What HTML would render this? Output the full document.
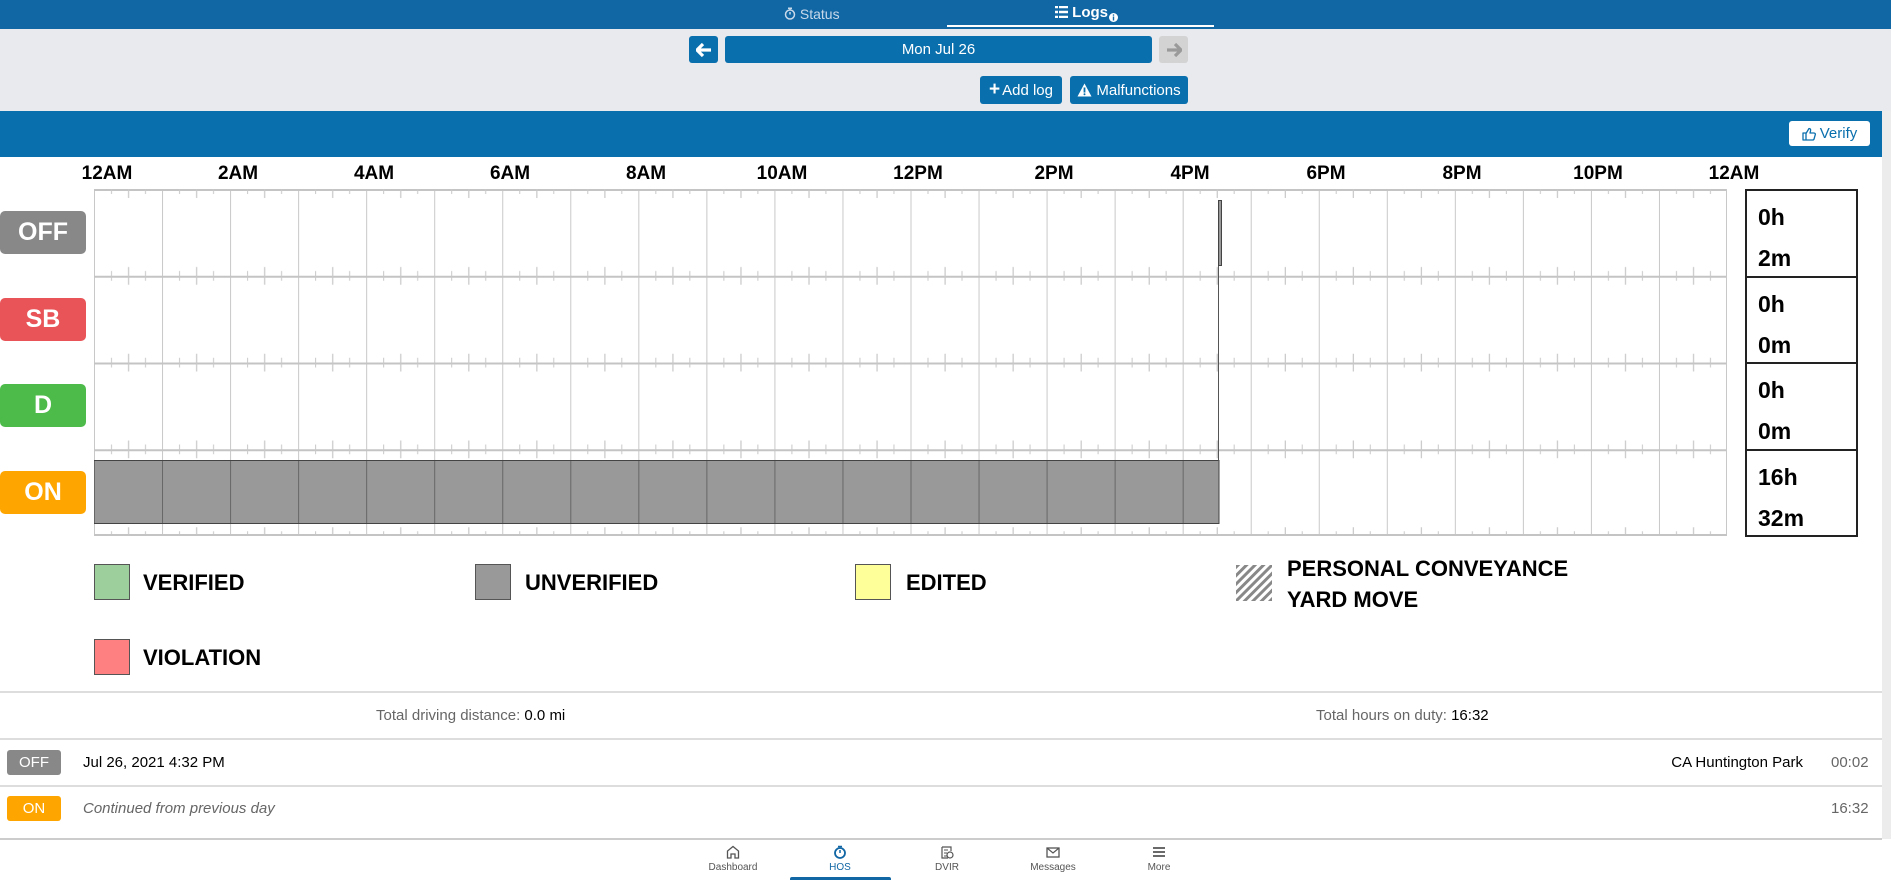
<!DOCTYPE html>
<html><head><meta charset="utf-8"><style>
*{margin:0;padding:0;box-sizing:border-box}
body{width:1891px;height:880px;position:relative;overflow:hidden;background:#fff;font-family:"Liberation Sans",sans-serif}
.a{position:absolute}
.top{left:0;top:0;width:1891px;height:29px;background:#1166a4}
.gray{left:0;top:29px;width:1891px;height:82px;background:#e9eaee}
.btn{background:#0a6fad;border-radius:3px;color:#fff;font-size:15px;display:flex;align-items:center;justify-content:center}
.band{left:0;top:111px;width:1882px;height:46px;background:#0a6fad}
.sb{left:1882px;top:111px;width:9px;height:728px;background:#ececec}
.tl{top:163px;font-size:19px;font-weight:bold;width:80px;text-align:center;color:#000}
.st{left:0;width:86px;height:43px;border-radius:5px;color:#fff;font-weight:bold;font-size:25px;display:flex;align-items:center;justify-content:center}
.tot{left:1745px;width:113px;border:2px solid #222;font-size:23px;font-weight:bold;padding-left:11px}
.lg{width:36px;height:36px;border:1px solid #555}
.lt{font-size:22px;font-weight:bold;color:#000}
.hl{left:0;width:1882px;height:2px;background:#ddd}
.sm{font-size:15px;color:#666}
.bd{left:7px;width:54px;height:25px;border-radius:3px;color:#fff;font-size:15px;display:flex;align-items:center;justify-content:center}
.nav{top:845px;width:90px;text-align:center;font-size:10px;color:#555}
</style></head><body>
<div class="a top"></div>
<div class="a" style="left:784px;top:6px;font-size:14px;color:#c8d9ea">
<svg width="12" height="13" viewBox="0 0 12 13" style="vertical-align:-1px"><circle cx="6" cy="7.5" r="4.5" fill="none" stroke="#c8d9ea" stroke-width="1.5"/><path d="M4 1.2h4M6 1.2v2M6 7.5V5" stroke="#c8d9ea" stroke-width="1.5"/></svg> Status</div>
<div class="a" style="left:1055px;top:4px;font-size:15px;color:#fff;font-weight:bold">
<svg width="13" height="12" viewBox="0 0 13 12" style="vertical-align:-1px"><path d="M0 1h3M4 1h9M0 6h3M4 6h9M0 11h3M4 11h9" stroke="#fff" stroke-width="2.5"/></svg> Logs<svg width="9" height="9" viewBox="0 0 9 9" style="vertical-align:-5px;margin-left:1px"><circle cx="4.5" cy="4.5" r="4.5" fill="#fff"/><path d="M4.5 3.5v4" stroke="#1166a4" stroke-width="1.4"/><circle cx="4.5" cy="2" r=".8" fill="#1166a4"/></svg></div>
<div class="a" style="left:947px;top:25px;width:267px;height:2px;background:#fff"></div>
<div class="a gray"></div>
<div class="a btn" style="left:689px;top:36px;width:29px;height:27px"><svg width="16" height="14" viewBox="0 0 16 14"><path d="M7 1L1 7l6 6M1.5 7H15" fill="none" stroke="#fff" stroke-width="3.2" stroke-linejoin="round"/></svg></div>
<div class="a btn" style="left:725px;top:36px;width:427px;height:27px">Mon Jul 26</div>
<div class="a btn" style="left:1159px;top:36px;width:29px;height:27px;background:#d3d3d3"><svg width="16" height="14" viewBox="0 0 16 14"><path d="M9 1l6 6-6 6M14.5 7H1" fill="none" stroke="#9a9a9a" stroke-width="3.2" stroke-linejoin="round"/></svg></div>
<div class="a btn" style="left:980px;top:76px;width:82px;height:28px"><b style="font-size:19px;margin-right:2px">+</b>Add log</div>
<div class="a btn" style="left:1070px;top:76px;width:118px;height:28px"><svg width="15" height="14" viewBox="0 0 15 14" style="margin-right:4px"><path d="M7.5 0.5L14.5 13.5H0.5z" fill="#fff"/><path d="M7.5 4.5v5" stroke="#0a6fad" stroke-width="1.8"/><circle cx="7.5" cy="11.3" r="1" fill="#0a6fad"/></svg>Malfunctions</div>
<div class="a band"></div>
<div class="a sb"></div>
<div class="a" style="left:1789px;top:121px;width:81px;height:25px;background:#fff;border-radius:3px;color:#0a6fad;font-size:15px;display:flex;align-items:center;justify-content:center"><svg width="14" height="14" viewBox="0 0 14 14" style="margin-right:4px"><path d="M1 6h3v7H1zM4 6.5l3-5c1.5 0 1.8 1 1.5 2.5L8 6h4c1 0 1.5.8 1.3 1.6l-1.2 4.2c-.2.8-.8 1.2-1.5 1.2H4" fill="none" stroke="#0a6fad" stroke-width="1.3" stroke-linejoin="round"/></svg>Verify</div>

<div class="a tl" style="left:67px">12AM</div>
<div class="a tl" style="left:198px">2AM</div>
<div class="a tl" style="left:334px">4AM</div>
<div class="a tl" style="left:470px">6AM</div>
<div class="a tl" style="left:606px">8AM</div>
<div class="a tl" style="left:742px">10AM</div>
<div class="a tl" style="left:878px">12PM</div>
<div class="a tl" style="left:1014px">2PM</div>
<div class="a tl" style="left:1150px">4PM</div>
<div class="a tl" style="left:1286px">6PM</div>
<div class="a tl" style="left:1422px">8PM</div>
<div class="a tl" style="left:1558px">10PM</div>
<div class="a tl" style="left:1694px">12AM</div>

<svg class="a" style="left:93px;top:188px" width="1636" height="350">
<defs>
<pattern id="p" x="1" y="1" width="68.0417" height="86.75" patternUnits="userSpaceOnUse">
<rect x="0" y="0" width="1" height="86.75" fill="#c8c8c8"/>
<rect x="0" y="0" width="68.0417" height="2" fill="#c4c4c4"/>
<rect x="17" y="0" width="1" height="5" fill="#c8c8c8"/><rect x="17" y="82" width="1" height="5" fill="#c8c8c8"/>
<rect x="34" y="0" width="1.2" height="9" fill="#c8c8c8"/><rect x="34" y="78" width="1.2" height="9" fill="#c8c8c8"/>
<rect x="51" y="0" width="1" height="5" fill="#c8c8c8"/><rect x="51" y="82" width="1" height="5" fill="#c8c8c8"/>
</pattern>
<pattern id="q" x="1" y="0" width="68.0417" height="10" patternUnits="userSpaceOnUse"><rect x="0" y="0" width="1" height="10" fill="#666"/></pattern>
</defs>
<rect x="1" y="1" width="1633" height="347" fill="url(#p)"/>
<rect x="1633" y="1" width="1" height="347" fill="#c8c8c8"/>
<rect x="1" y="346" width="1633" height="2" fill="#c4c4c4"/>
<rect x="1.5" y="272.5" width="1124.5" height="63" fill="#999" stroke="#444"/>
<rect x="1" y="273" width="1124" height="62" fill="url(#q)"/>
<rect x="1125" y="77" width="1" height="196" fill="#555"/>
<rect x="1125.5" y="12.5" width="3" height="65" fill="#999" stroke="#444"/>
</svg>

<div class="a st" style="top:211px;background:#888">OFF</div>
<div class="a st" style="top:298px;background:#e85457">SB</div>
<div class="a st" style="top:384px;background:#4cbb4a">D</div>
<div class="a st" style="top:471px;background:#ffa500">ON</div>

<div class="a tot" style="top:189px;height:89px"><div style="position:absolute;top:13px">0h</div><div style="position:absolute;top:54px">2m</div></div>
<div class="a tot" style="top:276px;height:88px"><div style="position:absolute;top:13px">0h</div><div style="position:absolute;top:54px">0m</div></div>
<div class="a tot" style="top:362px;height:89px"><div style="position:absolute;top:13px">0h</div><div style="position:absolute;top:54px">0m</div></div>
<div class="a tot" style="top:449px;height:88px"><div style="position:absolute;top:13px">16h</div><div style="position:absolute;top:54px">32m</div></div>

<div class="a lg" style="left:94px;top:564px;background:#9ccf9c"></div>
<div class="a lt" style="left:143px;top:570px">VERIFIED</div>
<div class="a lg" style="left:475px;top:564px;background:#999"></div>
<div class="a lt" style="left:525px;top:570px">UNVERIFIED</div>
<div class="a lg" style="left:855px;top:564px;background:#ffff99"></div>
<div class="a lt" style="left:906px;top:570px">EDITED</div>
<svg class="a" style="left:1236px;top:565px" width="36" height="36"><defs><pattern id="h" width="6" height="6" patternUnits="userSpaceOnUse" patternTransform="rotate(45)"><rect width="3" height="6" fill="#888"/></pattern></defs><rect width="36" height="36" fill="url(#h)"/></svg>
<div class="a lt" style="left:1287px;top:556px">PERSONAL CONVEYANCE</div>
<div class="a lt" style="left:1287px;top:587px">YARD MOVE</div>
<div class="a lg" style="left:94px;top:639px;background:#ff8080"></div>
<div class="a lt" style="left:143px;top:645px">VIOLATION</div>

<div class="a hl" style="top:691px"></div>
<div class="a sm" style="left:376px;top:707px">Total driving distance: <span style="color:#000">0.0 mi</span></div>
<div class="a sm" style="left:1316px;top:707px">Total hours on duty: <span style="color:#000">16:32</span></div>
<div class="a hl" style="top:738px"></div>
<div class="a bd" style="top:750px;background:#888">OFF</div>
<div class="a" style="left:83px;top:754px;font-size:15px;color:#000">Jul 26, 2021 4:32 PM</div>
<div class="a" style="left:1650px;width:153px;text-align:right;top:754px;font-size:15px;color:#000">CA Huntington Park</div>
<div class="a sm" style="left:1831px;top:754px">00:02</div>
<div class="a hl" style="top:785px"></div>
<div class="a bd" style="top:796px;background:#ffa500">ON</div>
<div class="a sm" style="left:83px;top:800px;font-style:italic">Continued from previous day</div>
<div class="a sm" style="left:1831px;top:800px">16:32</div>
<div class="a" style="left:0;top:838px;width:1882px;height:2px;background:#ccc"></div>

<div class="a nav" style="left:688px"><svg width="14" height="14" viewBox="0 0 14 14"><path d="M1.5 13V6L7 1.5 12.5 6v7H9V9H5v4z" fill="none" stroke="#555" stroke-width="1.3"/></svg><br>Dashboard</div>
<div class="a nav" style="left:795px;color:#1166a4"><svg width="14" height="14" viewBox="0 0 14 14"><circle cx="7" cy="8" r="5" fill="none" stroke="#1166a4" stroke-width="1.8"/><path d="M5 1.5h4M7 8V5" stroke="#1166a4" stroke-width="1.5"/></svg><br>HOS</div>
<div class="a nav" style="left:902px"><svg width="14" height="14" viewBox="0 0 14 14"><path d="M2 2h9v4M2 2v11h6" fill="none" stroke="#555" stroke-width="1.2"/><circle cx="10" cy="10" r="3" fill="none" stroke="#555" stroke-width="1.2"/><path d="M4 5h4M4 8h3M4 11h3" stroke="#555"/></svg><br>DVIR</div>
<div class="a nav" style="left:1008px"><svg width="14" height="14" viewBox="0 0 14 14"><rect x="1" y="3" width="12" height="9" fill="none" stroke="#555" stroke-width="1.3"/><path d="M1 3l6 5 6-5" fill="none" stroke="#555" stroke-width="1.2"/></svg><br>Messages</div>
<div class="a nav" style="left:1114px"><svg width="14" height="14" viewBox="0 0 14 14"><path d="M1 3h12M1 7h12M1 11h12" stroke="#555" stroke-width="1.8"/></svg><br>More</div>
<div class="a" style="left:790px;top:877px;width:101px;height:3px;background:#1166a4;border-radius:2px 2px 0 0"></div>
</body></html>
